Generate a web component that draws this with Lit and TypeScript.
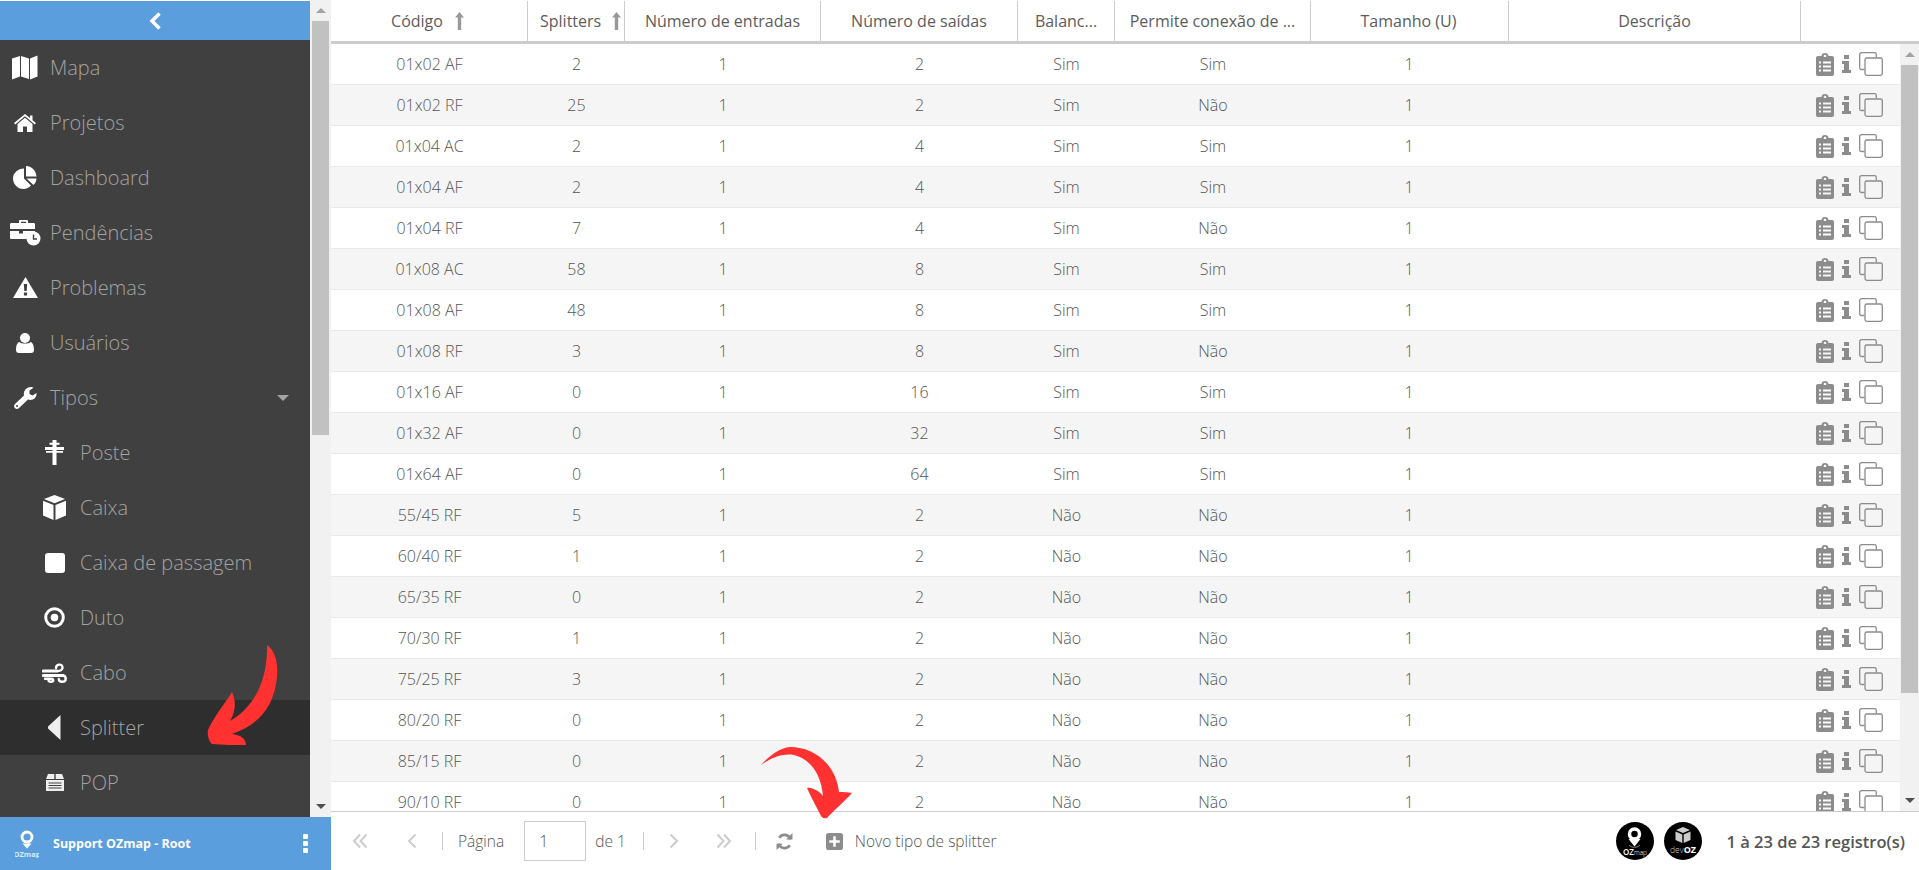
import { LitElement, html, css, svg } from "lit";
import { customElement } from "lit/decorators.js";

const I = {
  map: svg`<svg width="26" height="25" viewBox="0 0 26 25"><path fill="#fff" d="M0 3.500 8 1V21.500L0 24.500ZM9 1 17 3.500V24L9 21.500ZM18 3.500 25.500 .5V21.500L18 24.500Z"/></svg>`,
  home: svg`<svg width="22" height="18" viewBox="0 0 22 18"><path fill="#fff" d="M11 3.800 3.500 10V18H9V12.500H13V18H18.500V10ZM11 0 0 9 1.200 10.400 11 2.300 20.800 10.400 22 9 18.500 6.200V1.500H16V4.100Z"/></svg>`,
  pie: svg`<svg width="24" height="23" viewBox="0 0 24 23"><path fill="#fff" d="M11 2.500V12.500L18 19.500C16 21.500 13.500 23 10.500 23 4.500 23 0 18 0 12.500 0 7 5 2.500 11 2.500ZM13 0C18.500 0 23 4.500 23.500 10.500H13ZM13.500 12.500H23.500C23.400 15 22.400 17.300 20.500 19Z"/></svg>`,
  case: svg`<svg width="31" height="26" viewBox="0 0 31 26"><path fill="#fff" d="M9 3V.8C9 .3 9.500 0 10 0H17C17.500 0 18 .3 18 .8V3H23.500C24.500 3 25 3.600 25 4.500V9H0V4.500C0 3.600 .6 3 1.500 3ZM11 3H16V1.800H11ZM0 11H9V13.500H13V11H25V12.500C20.500 12.500 17.300 15.500 16.500 19H1.500C.6 19 0 18.500 0 17.500Z"/><circle cx="23.500" cy="18.500" r="7" fill="#fff"/><path fill="none" stroke="#404040" stroke-width="1.400" d="M23.500 14.500V19H27"/></svg>`,
  warn: svg`<svg width="25" height="21" viewBox="0 0 25 21"><path fill="#fff" fill-rule="evenodd" d="M12.500 0 25 21H0ZM10.800 7 11.300 14H13.700L14.200 7ZM10.900 15.500V18.500H14.100V15.500Z"/></svg>`,
  user: svg`<svg width="18" height="20" viewBox="0 0 18 20"><circle cx="9" cy="5" r="5" fill="#fff"/><path fill="#fff" d="M3.500 9C5 11 13 11 14.500 9 17 9.500 18 13 18 17 18 19 17 20 15 20H3C1 20 0 19 0 17 0 13 1 9.500 3.500 9Z"/></svg>`,
  wrench: svg`<svg width="23" height="22" viewBox="0 0 23 22"><path fill="#fff" fill-rule="evenodd" d="M17 0C18 0 19 .3 19.500 .8L15.500 3.500V7L18.500 8.500 22.500 6C23 10 20 13 16.500 13 15.500 13 14.700 12.800 14 12.500L5 21C3.800 22.300 2 22.300 .9 21.100-.2 20-.2 18.300 1 17L10 8.500C9 4 12.500 0 17 0ZM3 18A1 1 0 1 0 3.100 20 1 1 0 0 0 3 18Z"/></svg>`,
  poste: svg`<svg width="19" height="25" viewBox="0 0 19 25"><path fill="#fff" d="M7.500 0H11.500V2.800H14.500V4.800H11.500V7H19V10H11.500V11H18V12.800H11.500V25H7.500V12.800H1V11H7.500V10H0V7H7.500V4.800H4.500V2.800H7.500Z"/></svg>`,
  cube: svg`<svg width="23" height="25" viewBox="0 0 23 25"><path fill="#fff" d="M11.500 0 22 4 11.500 8.300 1 4ZM0 5.800 10.500 10V25L0 20.500ZM23 5.800V20.500L12.500 25V10Z"/></svg>`,
  square: svg`<svg width="20" height="20" viewBox="0 0 20 20"><rect width="20" height="20" rx="3" fill="#fff"/></svg>`,
  duto: svg`<svg width="21" height="21" viewBox="0 0 21 21"><circle cx="10.500" cy="10.500" r="8.800" fill="none" stroke="#fff" stroke-width="3"/><circle cx="10.500" cy="10.500" r="3.800" fill="#fff"/></svg>`,
  wind: svg`<svg width="25" height="21" viewBox="0 0 25 21"><g fill="none" stroke="#fff" stroke-linecap="round"><path stroke-width="3.200" d="M1.500 9H15M1.500 13.500H21"/><path stroke-width="2.400" d="M14 6C14 2.500 20 1 20.500 5 21 8 18 9 16 9M20 13.500C25 13.500 25 19.800 20 19.800 17.500 19.800 16.800 18 16.800 17M3 16.800H9C12 16.800 12 19.800 9 19.800 7.500 19.800 6.500 19 6.500 18"/></g></svg>`,
  tri: svg`<svg width="13" height="25" viewBox="0 0 13 25"><path fill="#eee" d="M12.500 0V25L0 13.500V11.500Z"/></svg>`,
  pop: svg`<svg width="20" height="17" viewBox="0 0 20 17"><path fill="#eee" fill-rule="evenodd" d="M3 0H9.300V5H1ZM10.700 0H17L19 5H10.700ZM1 6H19V17H1ZM3.500 8.500V9.500H16.500V8.500ZM3.500 11V12H16.500V11ZM3.500 13.500V14.500H16.500V13.500Z"/></svg>`,
  clip: svg`<svg width="18" height="23" viewBox="0 0 18 23"><path fill="#8c8c8c" fill-rule="evenodd" d="M2 3H5.500C5.500 1 7 0 9 0 11 0 12.500 1 12.500 3H16C17.200 3 18 3.800 18 5V21C18 22.200 17.200 23 16 23H2C.8 23 0 22.200 0 21V5C0 3.800 .8 3 2 3ZM7.800 2.800V4H10.200V2.800C10.200 1.500 7.800 1.500 7.800 2.800ZM3 8.500V10.500H5V8.500ZM7 8.500V10.500H15V8.500ZM3 12.500V14.500H5V12.500ZM7 12.500V14.500H15V12.500ZM3 16.500V18.500H5V16.500ZM7 16.500V18.500H15V16.500Z"/></svg>`,
  info: svg`<svg width="9" height="18" viewBox="0 0 9 18"><path fill="#8c8c8c" d="M2 0H7V4H2ZM0 6H7V15H9V18H0V15H2V9H0Z"/></svg>`,
  copy: svg`<svg width="24" height="24" viewBox="0 0 24 24"><g fill="none" stroke="#8c8c8c" stroke-width="1.300"><path d="M5.500 17.500H2.500C1.300 17.500.7 16.800.7 15.800V2.500C.7 1.400 1.300.7 2.500.7H15.500C16.500.7 17.300 1.400 17.300 2.500V5.500"/><rect x="6" y="6" width="17.300" height="17.300" rx="1.800"/></g></svg>`,
};

const ROWS: string[][] = [
  ["01x02 AF","2","1","2","Sim","Sim"],["01x02 RF","25","1","2","Sim","Não"],
  ["01x04 AC","2","1","4","Sim","Sim"],["01x04 AF","2","1","4","Sim","Sim"],
  ["01x04 RF","7","1","4","Sim","Não"],["01x08 AC","58","1","8","Sim","Sim"],
  ["01x08 AF","48","1","8","Sim","Sim"],["01x08 RF","3","1","8","Sim","Não"],
  ["01x16 AF","0","1","16","Sim","Sim"],["01x32 AF","0","1","32","Sim","Sim"],
  ["01x64 AF","0","1","64","Sim","Sim"],["55/45 RF","5","1","2","Não","Não"],
  ["60/40 RF","1","1","2","Não","Não"],["65/35 RF","0","1","2","Não","Não"],
  ["70/30 RF","1","1","2","Não","Não"],["75/25 RF","3","1","2","Não","Não"],
  ["80/20 RF","0","1","2","Não","Não"],["85/15 RF","0","1","2","Não","Não"],
  ["90/10 RF","0","1","2","Não","Não"],
];

const NAV = [
  { t: "Mapa", i: I.map }, { t: "Projetos", i: I.home }, { t: "Dashboard", i: I.pie },
  { t: "Pendências", i: I.case }, { t: "Problemas", i: I.warn }, { t: "Usuários", i: I.user },
  { t: "Tipos", i: I.wrench, caret: true },
  { t: "Poste", i: I.poste, sub: true }, { t: "Caixa", i: I.cube, sub: true },
  { t: "Caixa de passagem", i: I.square, sub: true }, { t: "Duto", i: I.duto, sub: true },
  { t: "Cabo", i: I.wind, sub: true }, { t: "Splitter", i: I.tri, sub: true, on: true },
  { t: "POP", i: I.pop, sub: true },
];

const HEAD: [string, boolean][] = [
  ["Código", true], ["Splitters", true], ["Número de entradas", false], ["Número de saídas", false],
  ["Balanc...", false], ["Permite conexão de ...", false], ["Tamanho (U)", false], ["Descrição", false], ["", false],
];

const sortUp = svg`<svg width="9" height="18" viewBox="0 0 9 18"><path fill="#999" d="M4.500 0 9 5.500H6.200V18H2.800V5.500H0Z"/></svg>`;

@customElement("app-root")
export class AppRoot extends LitElement {
  static styles = css`
    :host { display: grid; grid-template-columns: 331px 1fr; height: 870px; overflow: hidden; position: relative;
      font-family: "Open Sans", sans-serif; background: #fff; color: #666; }
    .side { display: flex; flex-direction: column; min-height: 0; padding-top: 1px; }
    .side-top { flex: 1; display: flex; min-height: 0; }
    .nav { width: 310px; background: #404040; overflow: hidden; }
    .collapse { height: 39px; background: #5b9edd; display: flex; align-items: center; justify-content: center; }
    .item { height: 55px; display: flex; align-items: center; color: #a3a3a3; font-size: 20px; font-weight: 300; position: relative; }
    .item.on { background: #2e2e2e; }
    .ico { width: 50px; display: flex; justify-content: center; box-sizing: border-box; flex: none; }
    .sub .ico { width: 80px; padding-left: 29px; }
    .caret { position: absolute; left: 277px; top: 25px; width: 0; height: 0; border: 6px solid transparent; border-top: 6px solid #a3a3a3; border-bottom: 0; }
    .bar { background: #f1f1f1; display: flex; flex-direction: column; align-items: center; flex: none; }
    .bar.left { width: 21px; margin-top: -1px; }
    .bar.right { width: 19px; }
    .up, .down { height: 21px; display: flex; align-items: center; justify-content: center; flex: none; }
    .up i { border: 5px solid transparent; border-bottom: 5px solid #a3a3a3; border-top: 0; }
    .down i { border: 5px solid transparent; border-top: 5px solid #505050; border-bottom: 0; }
    .thumb { background: #c1c1c1; flex: none; width: 17px; }
    .left .thumb { height: 414px; }
    .right .thumb { height: 628px; }
    .fill { flex: 1; }
    .foot { height: 53px; background: #5b9edd; display: flex; align-items: center; color: #fff; font-size: 12.500px; font-weight: 700; flex: none; }
    .foot .logo { width: 53px; padding-left: 15px; box-sizing: border-box; flex: none; display: flex; }
    .foot .name { flex: 1; }
    .foot .dots { width: 5px; display: grid; gap: 2px; margin-right: 23px; }
    .foot .dots b { height: 5px; background: #fff; border-radius: 1px; }
    .main { display: flex; flex-direction: column; min-width: 0; min-height: 0; }
    .grid { display: grid; grid-template-columns: 197px 97px 196px 197px 97px 196px 198px 292px 1fr; }
    .thead { height: 40px; padding-top: 1px; border-bottom: 3px solid #ccc; flex: none; font-size: 16px; color: #5c5c5c; }
    .th { display: flex; align-items: center; justify-content: center; gap: 12px; border-right: 1px solid #ccc; white-space: nowrap; }
    .th:last-child { border-right: 0; }
    .th.first { padding-right: 3px; }
    .th.tight { justify-content: flex-start; padding-left: 12px; gap: 11px; }
    .th.size, .td.size { padding-right: 2px; }
    .tbody-wrap { flex: 1; min-height: 0; display: flex; }
    .tbody { flex: 1; overflow: hidden; min-width: 0; }
    .row { height: 40px; border-bottom: 1px solid #e9e9e9; font-size: 16px; font-weight: 300; color: #555; background: #fff; }
    .row:nth-child(even) { background: #f5f5f5; }
    .td { display: flex; align-items: center; justify-content: center; }
    .actions { display: flex; align-items: center; gap: 8px; padding-left: 15px; }
    .tool { height: 58px; border-top: 1px solid #ccc; flex: none; display: flex; align-items: center; font-size: 15.500px; font-weight: 300; color: #555; }
    .dbl { width: 16px; height: 16px; flex: none; }
    .sgl { width: 10px; height: 16px; flex: none; }
    .first-pg { margin-left: 21px; }
    .prev { margin-left: 39px; }
    .sep { width: 1px; height: 18px; background: #ccc; flex: none; }
    .s1 { margin-left: 25px; }
    .lbl { margin-left: 15px; }
    .input { width: 62px; height: 40px; border: 1px solid #ccc; box-sizing: border-box; padding-left: 14px; display: flex; align-items: center; margin: 0 9px 0 20px; font-size: 16px; }
    .s2 { margin-left: 17px; }
    .next { margin-left: 25px; }
    .last { margin-left: 37px; }
    .s3 { margin-left: 23px; }
    .refresh { margin-left: 20px; flex: none; }
    .plus { margin-left: 33px; flex: none; }
    .new { margin-left: 12px; }
    .count { margin-left: auto; display: flex; align-items: center; gap: 10px; padding-right: 14px; }
    .count span { margin-left: 14px; font-size: 16.500px; font-weight: 600; color: #555; }
    .count svg { display: block; }
    .arrow { position: absolute; left: 0; top: 0; pointer-events: none; }
  `;

  private bar(cls: string) {
    return html`<div class="bar ${cls}"><div class="up"><i></i></div><div class="thumb"></div><div class="fill"></div><div class="down"><i></i></div></div>`;
  }

  render() {
    return html`
      <div class="side">
        <div class="side-top">
          <div class="nav">
            <div class="collapse"><svg width="12" height="18" viewBox="0 0 12 18"><path fill="none" stroke="#fff" stroke-width="3.500" d="M10.500 1.500 3 9 10.500 16.500"/></svg></div>
            ${NAV.map(n => html`<div class="item ${n.sub ? "sub" : ""} ${n.on ? "on" : ""}"><span class="ico">${n.i}</span>${n.t}${n.caret ? html`<i class="caret"></i>` : ""}</div>`)}
          </div>
          ${this.bar("left")}
        </div>
        <div class="foot">
          <span class="logo"><svg width="24" height="28" viewBox="0 0 24 28"><circle cx="12" cy="7" r="5" fill="none" stroke="#fff" stroke-width="2.800"/><path fill="#fff" d="M7.500 13.500H16.500L12 18.500Z"/><text x="12" y="27" font-size="7.500" fill="#dbe9f7" text-anchor="middle" font-family="Open Sans">OZmap</text></svg></span>
          <span class="name">Support OZmap - Root</span>
          <span class="dots"><b></b><b></b><b></b></span>
        </div>
      </div>
      <div class="main">
        <div class="grid thead">
          ${HEAD.map((h, k) => html`<div class="th ${k === 0 ? "first" : ""} ${k === 1 ? "tight" : ""} ${k === 6 ? "size" : ""}">${h[0]}${h[1] ? sortUp : ""}</div>`)}
        </div>
        <div class="tbody-wrap">
          <div class="tbody">
            ${ROWS.map(r => html`<div class="grid row">
              ${r.map(c => html`<div class="td">${c}</div>`)}
              <div class="td size">1</div><div class="td"></div>
              <div class="actions">${I.clip}${I.info}${I.copy}</div>
            </div>`)}
          </div>
          ${this.bar("right")}
        </div>
        <div class="tool">
          <svg class="dbl first-pg" viewBox="0 0 16 16"><path fill="none" stroke="#ccc" stroke-width="2" d="M8 1.500 2 8 8 14.500M14.500 1.500 8.500 8 14.500 14.500"/></svg>
          <svg class="sgl prev" viewBox="0 0 10 16"><path fill="none" stroke="#ccc" stroke-width="2" d="M8.500 1.500 2 8 8.500 14.500"/></svg>
          <i class="sep s1"></i>
          <span class="lbl">Página</span>
          <span class="input">1</span>
          <span>de 1</span>
          <i class="sep s2"></i>
          <svg class="sgl next" viewBox="0 0 10 16"><path fill="none" stroke="#ccc" stroke-width="2" d="M1.500 1.500 8 8 1.500 14.500"/></svg>
          <svg class="dbl last" viewBox="0 0 16 16"><path fill="none" stroke="#ccc" stroke-width="2" d="M1.500 1.500 7.500 8 1.500 14.500M8 1.500 14 8 8 14.500"/></svg>
          <i class="sep s3"></i>
          <svg class="refresh" width="17" height="17" viewBox="0 0 15 16"><path fill="none" stroke="#8c8c8c" stroke-width="2.500" d="M13 6C12 3 10 1.800 7.500 1.800 5.500 1.800 3.500 3 2.500 4.500M2 10C3 13 5 14.200 7.500 14.200 9.500 14.200 11.500 13 12.500 11.500"/><path fill="#8c8c8c" d="M15 0V6H9ZM0 16V10H6Z"/></svg>
          <svg class="plus" width="17" height="17" viewBox="0 0 13 13"><path fill="#8c8c8c" fill-rule="evenodd" d="M2 0H11C12.200 0 13 .8 13 2V11C13 12.200 12.200 13 11 13H2C.8 13 0 12.200 0 11V2C0 .8 .8 0 2 0ZM5.500 2.500V5.500H2.500V7.500H5.500V10.500H7.500V7.500H10.500V5.500H7.500V2.500Z"/></svg>
          <span class="new">Novo tipo de splitter</span>
          <div class="count">
            <svg width="38" height="38" viewBox="0 0 38 38"><circle cx="19" cy="19" r="19" fill="#000"/><circle cx="18.500" cy="12" r="5" fill="none" stroke="#fff" stroke-width="3.500"/><path fill="#fff" d="M12.500 17H24.500L18.500 24.500Z"/><path fill="none" stroke="#888" d="M13 23C15 26 22 26 24 23"/><text x="19" y="33" fill="#fff" text-anchor="middle" font-family="Open Sans"><tspan font-size="8" font-weight="600">OZ</tspan><tspan font-size="6.500" font-weight="300">map</tspan></text></svg>
            <svg width="38" height="38" viewBox="0 0 38 38"><circle cx="19" cy="19" r="19" fill="#000"/><path fill="#ccc" d="M12 8 19 5 26 8 19 11ZM11.500 9.500 18.300 12.500V21L11.500 18ZM26.500 9.500 19.700 12.500V21L26.500 18Z"/><text x="19" y="31" fill="#ccc" text-anchor="middle" font-family="Open Sans"><tspan font-size="8.500" font-weight="300">dev</tspan><tspan font-size="9" font-weight="700" fill="#fff">OZ</tspan></text></svg>
            <span>1 à 23 de 23 registro(s)</span>
          </div>
        </div>
      </div>
      <svg class="arrow" width="1919" height="870" viewBox="0 0 1919 870">
        <path fill="#ff3131" d="M267 645C277 652 279 668 276 684 272 708 258 725 232 734 240 735 246 738 246 745 236 745 222 745 212 744 209 742 207 735 208 730 215 715 224 705 232 692 236 700 236 712 230 721 250 710 268 685 267 645Z"/>
        <path fill="#ff3131" d="M761 765C770 755 780 748 790 747 815 747 836 765 839 792 843 792 848 792 852 793 843 803 832 812 827 818 823 819 822 817 821 816 816 806 811 797 807 788 812 787 819 791 823 796 821 775 812 760 794 755 782 753 771 758 761 765Z"/>
      </svg>
    `;
  }
}
